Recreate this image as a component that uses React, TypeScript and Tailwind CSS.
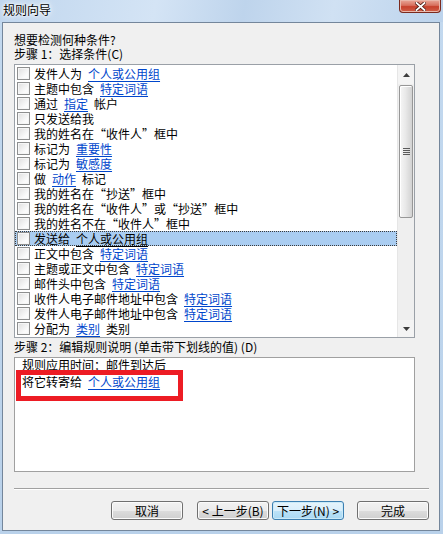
import clsx from 'clsx';

type Seg = string | { link: string };

const conditions: Seg[][] = [
  ['发件人为', { link: '个人或公用组' }],
  ['主题中包含', { link: '特定词语' }],
  ['通过', { link: '指定' }, '帐户'],
  ['只发送给我'],
  ['我的姓名在“收件人”框中'],
  ['标记为', { link: '重要性' }],
  ['标记为', { link: '敏感度' }],
  ['做', { link: '动作' }, '标记'],
  ['我的姓名在“抄送”框中'],
  ['我的姓名在“收件人”或“抄送”框中'],
  ['我的姓名不在“收件人”框中'],
  ['发送给', { link: '个人或公用组' }],
  ['正文中包含', { link: '特定词语' }],
  ['主题或正文中包含', { link: '特定词语' }],
  ['邮件头中包含', { link: '特定词语' }],
  ['收件人电子邮件地址中包含', { link: '特定词语' }],
  ['发件人电子邮件地址中包含', { link: '特定词语' }],
  ['分配为', { link: '类别' }, '类别'],
];

const SELECTED = 11;

// curly quotes are full width in the original dialog font
function Quoted({ text }: { text: string }) {
  const parts = text.split(/([“”])/);
  return (
    <>
      {parts.map((p, i) =>
        p === '“' || p === '”' ? (
          <span key={i} className="[font-feature-settings:'fwid']">
            {p}
          </span>
        ) : (
          p
        )
      )}
    </>
  );
}

function Checkbox() {
  return (
    <span className="block h-[13px] w-[13px] shrink-0 border border-[#8e8f8f] bg-[linear-gradient(135deg,#dedede,#fbfbfb_70%)] shadow-[inset_0_0_0_1px_#f6f6f6]" />
  );
}

function Segments({ segs, selected }: { segs: Seg[]; selected?: boolean }) {
  return (
    <span className="flex items-center gap-[6px] whitespace-nowrap">
      {segs.map((s, i) =>
        typeof s === 'string' ? (
          <span key={i}>
            <Quoted text={s} />
          </span>
        ) : (
          <span
            key={i}
            className={clsx('underline underline-offset-[2px]', selected ? 'text-black' : 'text-[#0046cc]')}
          >
            {s.link}
          </span>
        )
      )}
    </span>
  );
}

function ScrollArrow({ down }: { down?: boolean }) {
  return (
    <svg width="7" height="4" viewBox="0 0 7 4" className={clsx(down && 'rotate-180')}>
      <path d="M3.5 0 L7 4 L0 4 Z" fill="#3d3d3d" />
    </svg>
  );
}

function Button({ label, primary }: { label: string; primary?: boolean }) {
  return (
    <button
      className={clsx(
        'flex h-[19px] w-[72px] items-center justify-center whitespace-pre rounded-[3px] border text-[12px] leading-[14px]',
        primary
          ? 'border-[#3c7fb1] bg-[linear-gradient(180deg,#e5f4fc_0%,#d9eefb_50%,#bde3f8_51%,#a9d8f3_100%)] shadow-[inset_0_0_0_1px_#cbeaf8]'
          : 'border-[#707070] bg-[linear-gradient(180deg,#f2f2f2_0%,#ebebeb_50%,#dddddd_51%,#cfcfcf_100%)] shadow-[inset_0_0_0_1px_#fbfbfb]'
      )}
    >
      {label}
    </button>
  );
}

export default function App() {
  return (
    <div
      className="flex h-[534px] w-[443px] flex-col overflow-hidden bg-[linear-gradient(180deg,#c3d9ef,#b9d1ea)] text-[12px] leading-[14px] text-black"
      style={{ fontFamily: '"Noto Sans CJK SC", "Noto Sans", sans-serif' }}
    >
      {/* title bar */}
      <div className="flex h-[22px] shrink-0 items-start justify-between bg-[linear-gradient(100deg,#c0d6ee_0%,#d4e4f5_35%,#bed4ec_55%,#d0e1f3_75%,#bcd3ec_100%)]">
        <span className="pl-[3px] pt-[3px] text-[12px] leading-[14px] [text-shadow:0_0_4px_#fff,0_0_8px_#fff,0_0_2px_#fff]">
          规则向导
        </span>
        <div className="mr-[2px] flex h-[13px] w-[42px] items-center justify-center rounded-b-[4px] border border-t-0 border-[#7b2a1e] bg-[linear-gradient(180deg,#e9a899_0%,#d7705e_45%,#c7412c_55%,#d0604a_100%)] shadow-[inset_0_0_0_1px_#eab7aa]">
          <svg width="11" height="9" viewBox="0 0 11 9">
            <path d="M1.5 1 L9.5 8 M9.5 1 L1.5 8" stroke="#4a1a12" strokeWidth="3.4" strokeLinecap="square" />
            <path d="M1.5 1 L9.5 8 M9.5 1 L1.5 8" stroke="#ffffff" strokeWidth="1.8" strokeLinecap="square" />
          </svg>
        </div>
      </div>

      {/* client area */}
      <div className="ml-[2px] mr-[3px] flex h-[509px] shrink-0 flex-col border border-[#74869b] bg-[#f0f0f0] pl-[11px] pt-[10px]">
        <div className="h-[14px]">想要检测何种条件?</div>
        <div className="h-[14px] whitespace-pre">步骤 1：选择条件(C)</div>

        {/* condition list */}
        <div className="mt-[3px] flex h-[274px] w-[401px] border border-[#9aa0a7] bg-white">
          <div className="flex-1 pt-[1px]">
            {conditions.map((segs, i) => {
              const selected = i === SELECTED;
              return (
                <div
                  key={i}
                  className={clsx(
                    'flex h-[15px] items-center border pl-[1px]',
                    selected ? 'border-dotted border-[#3a3a3a] bg-[#aacdf1]' : 'border-transparent'
                  )}
                >
                  <Checkbox />
                  <span className="ml-[4px]">
                    <Segments segs={segs} selected={selected} />
                  </span>
                </div>
              );
            })}
          </div>
          <div className="flex w-[17px] flex-col border-l border-[#e6e6e6] bg-[#efefef]">
            <div className="flex h-[19px] items-center justify-center bg-[#f4f4f4]">
              <ScrollArrow />
            </div>
            <div className="mx-[1px] mt-[1px] flex h-[133px] items-center justify-center rounded-[2px] border border-[#979797] bg-[linear-gradient(90deg,#f6f6f6,#e9e9e9_45%,#d2d2d2)] shadow-[inset_1px_1px_0_#ffffff]">
              <div className="flex flex-col gap-[1px]">
                <span className="block h-[1px] w-[7px] bg-[#5a5a5a]" />
                <span className="block h-[1px] w-[7px] bg-[#5a5a5a]" />
                <span className="block h-[1px] w-[7px] bg-[#5a5a5a]" />
                <span className="block h-[1px] w-[7px] bg-[#5a5a5a]" />
              </div>
            </div>
            <div className="flex-1" />
            <div className="flex h-[17px] items-center justify-center bg-[#f4f4f4]">
              <ScrollArrow down />
            </div>
          </div>
        </div>

        <div className="mt-[2px] h-[14px] whitespace-pre">步骤 2：编辑规则说明 (单击带下划线的值) (D)</div>

        {/* rule description */}
        <div className="relative mt-[3px] h-[115px] w-[401px] border border-[#a0a0a0] bg-white pl-[7px]">
          <div className="h-[14px]">规则应用时间：邮件到达后</div>
          <div className="mt-[3px] h-[14px]">
            <Segments segs={['将它转寄给', { link: '个人或公用组' }]} />
          </div>
          <div className="absolute left-[1px] top-[12px] h-[31px] w-[167px] border-[5px] border-[#ed1c24]" />
        </div>

        <div className="mt-[16px] h-[2px] w-[415px] border-t border-b border-t-[#a0a0a0] border-b-[#ffffff]" />

        <div className="mt-[11px] flex w-[415px] justify-end">
          <Button label="取消" />
          <div className="ml-[14px]">
            <Button label="< 上一步(B)" />
          </div>
          <div className="ml-[3px]">
            <Button label="下一步(N) >" primary />
          </div>
          <div className="ml-[13px]">
            <Button label="完成" />
          </div>
        </div>
      </div>
    </div>
  );
}
